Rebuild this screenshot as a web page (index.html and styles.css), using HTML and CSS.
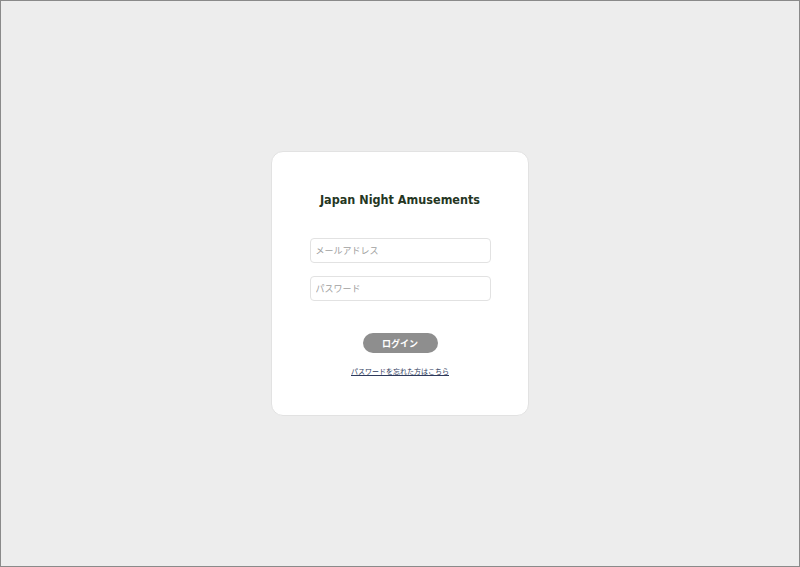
FILE: index.html
```html
<!doctype html>
<html lang="ja">
    <head>
        <meta charset="UTF-8" />
        <meta name="viewport" content="width=device-width, initial-scale=1.0" />
        <title>Japan Night Amusements</title>
        <link rel="stylesheet" href="styles.css">
    </head>
    <body>
        <div class="login-card">
            <h1>Japan Night Amusements</h1>
            <form class="login-form">
                <input type="email" class="field" placeholder="メールアドレス" />
                <input type="password" class="field" placeholder="パスワード" />
                <button type="submit" class="login-button">ログイン</button>
            </form>
            <a href="#" class="forgot-link">パスワードを忘れた方はこちら</a>
        </div>
    </body>
</html>
```

FILE: styles.css
```css
:root {
    --background-color: #ededed;
    --card-background: #ffffff;
    --title-color: #25361f;
    --border-color: #e2e2e2;
    --placeholder-color: #a0a0a0;
    --button-color: #8e8e8e;
    --link-color: #2e3a5c;
}

html {
    height: 100%;
}

body {
    margin: 0;
    height: 100%;
    box-sizing: border-box;
    border: 1px solid #8a8a8a;
    background-color: var(--background-color);
    font-family: "DejaVu Sans", "Noto Sans CJK JP", sans-serif;
    display: flex;
    align-items: center;
    justify-content: center;
}

.login-card {
    width: 258px;
    box-sizing: border-box;
    margin-right: 1px;
    padding: 40px 37px 39px 38px;
    background-color: var(--card-background);
    border: 1px solid var(--border-color);
    border-radius: 12px;
    display: flex;
    flex-direction: column;
    align-items: center;
}

h1 {
    margin: 0 0 30px;
    font-family: "DejaVu Sans Condensed", "DejaVu Sans", sans-serif;
    font-size: 12.5px;
    line-height: 16px;
    font-weight: 700;
    color: var(--title-color);
    text-align: center;
    white-space: nowrap;
}

.login-form {
    width: 100%;
    display: flex;
    flex-direction: column;
    align-items: center;
}

.field {
    width: 100%;
    height: 25px;
    box-sizing: border-box;
    margin: 0 0 13px;
    padding: 0 5px;
    border: 1px solid var(--border-color);
    border-radius: 4px;
    font-family: "Noto Sans CJK JP", sans-serif;
    font-size: 9px;
    outline: none;
}

.field::placeholder {
    color: var(--placeholder-color);
}

.login-button {
    margin-top: 19px;
    width: 75px;
    height: 20px;
    border: none;
    border-radius: 10px;
    background-color: var(--button-color);
    color: #ffffff;
    font-family: "Noto Sans CJK JP", sans-serif;
    font-size: 9px;
    font-weight: 700;
    cursor: pointer;
}

.forgot-link {
    margin-top: 13px;
    font-family: "Noto Sans CJK JP", sans-serif;
    font-size: 7px;
    line-height: 10px;
    color: var(--link-color);
}
```
